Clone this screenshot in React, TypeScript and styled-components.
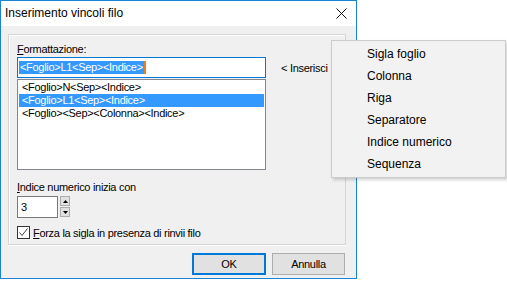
import styled, { createGlobalStyle } from 'styled-components'

const GlobalStyle = createGlobalStyle`
  html, body {
    margin: 0;
    background: #ffffff;
  }
  * {
    box-sizing: border-box;
  }
`

const Page = styled.div`
  position: relative;
  width: 507px;
  height: 281px;
  font-family: "Liberation Sans", Arial, sans-serif;
  font-size: 11px;
  letter-spacing: -0.3px;
  color: #000;
`

const Window = styled.div`
  width: 357px;
  height: 279px;
  border: 1px solid #1883d7;
  background: #f0f0f0;
  display: flex;
  flex-direction: column;
`

const TitleBar = styled.div`
  height: 25px;
  background: #ffffff;
  display: flex;
  align-items: center;
  justify-content: space-between;
  padding: 0 9px 1px 4px;
`

const Title = styled.span`
  font-size: 12px;
  letter-spacing: 0;
`

const Client = styled.div`
  flex: 1;
  display: flex;
  flex-direction: column;
  padding: 8px 10px 0 7px;
`

const GroupBox = styled.div`
  height: 211px;
  border: 1px solid #d5d5d5;
  box-shadow: inset 1px 1px 0 #fff, 0 1px 0 #fff;
  padding: 8px 8px 0 8px;
  display: flex;
  flex-direction: column;
`

const Label = styled.div<{ $top?: number }>`
  height: 13px;
  line-height: 13px;
  margin-top: ${p => p.$top ?? 0}px;
  white-space: nowrap;
`

const Key = styled.span`
  text-decoration: underline;
  text-underline-offset: 1px;
`

const FormatRow = styled.div`
  display: flex;
  margin-top: 1px;
`

const EditBox = styled.div`
  width: 249px;
  height: 21px;
  border: 1px solid #0078d7;
  background: #fff;
  display: flex;
  align-items: center;
  padding-left: 1px;
`

const Selected = styled.span`
  background: #3399ff;
  color: #fff;
  line-height: 13px;
  padding: 0 1px;
`

const Caret = styled.span`
  width: 2px;
  height: 13px;
  background: #e8801a;
`

const InsertButton = styled.div`
  margin-left: 15px;
  padding-top: 5px;
  white-space: nowrap;
`

const ListBox = styled.div`
  width: 249px;
  height: 91px;
  margin-top: 1px;
  border: 1px solid #828790;
  background: #fff;
  padding: 1px 1px 0 1px;
`

const ListItem = styled.div<{ $selected?: boolean }>`
  height: 13px;
  line-height: 13px;
  padding-left: 3px;
  background: ${p => (p.$selected ? '#3399ff' : 'transparent')};
  color: ${p => (p.$selected ? '#fff' : '#000')};
`

const SpinRow = styled.div`
  display: flex;
  gap: 2px;
  margin-top: 2px;
`

const SpinEdit = styled.div`
  width: 41px;
  height: 22px;
  border: 1px solid #7a7a7a;
  background: #fff;
  padding-left: 3px;
  line-height: 20px;
`

const SpinButtons = styled.div`
  display: flex;
  flex-direction: column;
  gap: 1px;
`

const SpinButton = styled.div`
  width: 10px;
  height: 10px;
  border: 1px solid #adadad;
  background: #e1e1e1;
  display: flex;
  align-items: center;
  justify-content: center;
`

const CheckRow = styled.div`
  display: flex;
  align-items: center;
  gap: 3px;
  margin-top: 8px;
  white-space: nowrap;
`

const CheckBox = styled.div`
  width: 13px;
  height: 13px;
  border: 1px solid #333;
  background: #fff;
  display: flex;
  align-items: center;
  justify-content: center;
`

const ButtonRow = styled.div`
  display: flex;
  justify-content: flex-end;
  gap: 6px;
  margin-top: 8px;
  padding-right: 1px;
`

const Button = styled.div<{ $default?: boolean; $w: number }>`
  width: ${p => p.$w}px;
  height: 22px;
  background: #e1e1e1;
  border: ${p => (p.$default ? '2px solid #0078d7' : '1px solid #adadad')};
  display: flex;
  align-items: center;
  justify-content: center;
`

const Menu = styled.div`
  position: absolute;
  left: 331px;
  top: 40px;
  width: 175px;
  height: 138px;
  background: #f2f2f2;
  border: 1px solid #cccccc;
  box-shadow: 2px 2px 3px rgba(0, 0, 0, 0.18);
  padding: 2px 0 0 1px;
  font-size: 12px;
  letter-spacing: 0;
`

const MenuItem = styled.div`
  height: 22px;
  line-height: 22px;
  padding-left: 34px;
`

const menuItems = ['Sigla foglio', 'Colonna', 'Riga', 'Separatore', 'Indice numerico', 'Sequenza']

const listItems = ['<Foglio>N<Sep><Indice>', '<Foglio>L1<Sep><Indice>', '<Foglio><Sep><Colonna><Indice>']

export default function App() {
  return (
    <Page>
      <GlobalStyle />
      <Window>
        <TitleBar>
          <Title>Inserimento vincoli filo</Title>
          <svg width="11" height="11" viewBox="0 0 11 11">
            <path d="M0.5 0.5 L10.5 10.5 M10.5 0.5 L0.5 10.5" stroke="#111" strokeWidth="1" />
          </svg>
        </TitleBar>
        <Client>
          <GroupBox>
            <Label>
              <Key>F</Key>ormattazione:
            </Label>
            <FormatRow>
              <EditBox>
                <Selected>{'<Foglio>L1<Sep><Indice>'}</Selected>
                <Caret />
              </EditBox>
              <InsertButton>{'< Inserisci'}</InsertButton>
            </FormatRow>
            <ListBox>
              {listItems.map((item, i) => (
                <ListItem key={i} $selected={i === 1}>
                  {item}
                </ListItem>
              ))}
            </ListBox>
            <Label $top={11}>
              <Key>I</Key>ndice numerico inizia con
            </Label>
            <SpinRow>
              <SpinEdit>3</SpinEdit>
              <SpinButtons>
                <SpinButton>
                  <svg width="5" height="3" viewBox="0 0 5 3">
                    <path d="M2.5 0 L5 3 L0 3 Z" fill="#000" />
                  </svg>
                </SpinButton>
                <SpinButton>
                  <svg width="5" height="3" viewBox="0 0 5 3">
                    <path d="M0 0 L5 0 L2.5 3 Z" fill="#000" />
                  </svg>
                </SpinButton>
              </SpinButtons>
            </SpinRow>
            <CheckRow>
              <CheckBox>
                <svg width="11" height="11" viewBox="0 0 11 11">
                  <path d="M1.5 5.5 L4 8.5 L9.5 1.5" stroke="#444" strokeWidth="1" fill="none" />
                </svg>
              </CheckBox>
              <span>
                <Key>F</Key>orza la sigla in presenza di rinvii filo
              </span>
            </CheckRow>
          </GroupBox>
          <ButtonRow>
            <Button $default $w={74}>OK</Button>
            <Button $w={73}>Annulla</Button>
          </ButtonRow>
        </Client>
      </Window>
      <Menu>
        {menuItems.map(item => (
          <MenuItem key={item}>{item}</MenuItem>
        ))}
      </Menu>
    </Page>
  )
}
